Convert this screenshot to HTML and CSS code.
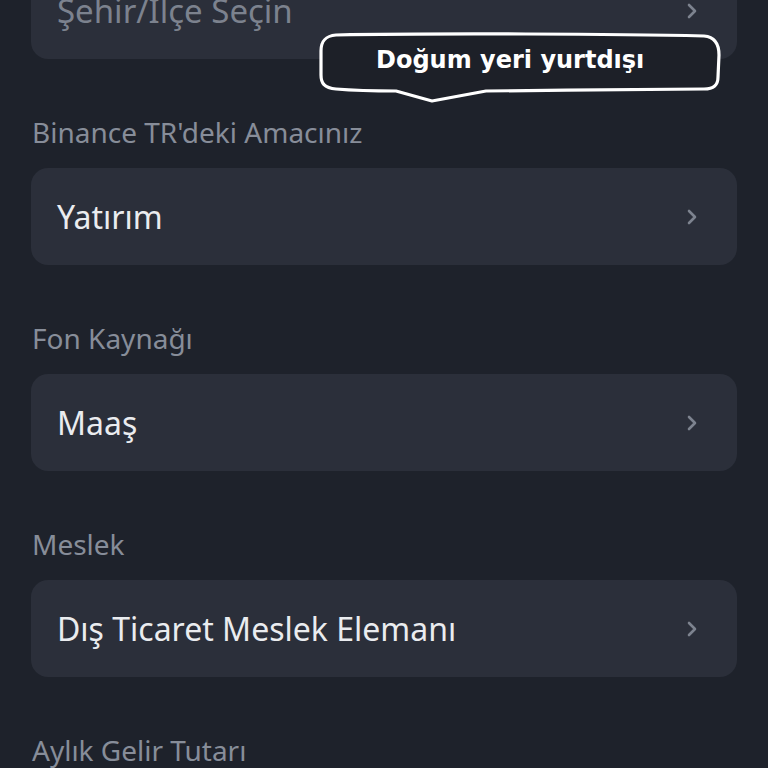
FILE: index.html
```html
<!DOCTYPE html>
<html lang="tr">
<head>
<meta charset="utf-8">
<link rel="stylesheet" href="styles.css">
</head>
<body>
<main class="form">
  <div class="field field-first">
    <div class="select">
      <span class="placeholder">Şehir/Ilçe Seçin</span>
      <svg class="chev" viewBox="0 0 10 16" width="10" height="16"><path d="M2 2 L8 8 L2 14" fill="none" stroke="currentColor" stroke-width="2.6" stroke-linecap="round" stroke-linejoin="round"/></svg>
    </div>
  </div>
  <div class="field">
    <div class="label">Binance TR'deki Amacınız</div>
    <div class="select">
      <span class="value">Yatırım</span>
      <svg class="chev" viewBox="0 0 10 16" width="10" height="16"><path d="M2 2 L8 8 L2 14" fill="none" stroke="currentColor" stroke-width="2.6" stroke-linecap="round" stroke-linejoin="round"/></svg>
    </div>
  </div>
  <div class="field">
    <div class="label">Fon Kaynağı</div>
    <div class="select">
      <span class="value">Maaş</span>
      <svg class="chev" viewBox="0 0 10 16" width="10" height="16"><path d="M2 2 L8 8 L2 14" fill="none" stroke="currentColor" stroke-width="2.6" stroke-linecap="round" stroke-linejoin="round"/></svg>
    </div>
  </div>
  <div class="field">
    <div class="label">Meslek</div>
    <div class="select">
      <span class="value">Dış Ticaret Meslek Elemanı</span>
      <svg class="chev" viewBox="0 0 10 16" width="10" height="16"><path d="M2 2 L8 8 L2 14" fill="none" stroke="currentColor" stroke-width="2.6" stroke-linecap="round" stroke-linejoin="round"/></svg>
    </div>
  </div>
  <div class="field">
    <div class="label">Aylık Gelir Tutarı</div>
  </div>
</main>
<div class="balloon">
  <svg class="balloon-shape" viewBox="0 0 404 74" width="404" height="74">
    <path d="M18 4 C120 2 300 3 386 5 C398 6 401 14 401 24 L400 46 C400 54 396 58 386 58 C320 59 240 59 168 60 L114 70 L78 60 C50 60 30 59 18 58 C6 57 3 52 3 44 L3 20 C3 10 7 5 18 4 Z" fill="#1d2028" stroke="#ffffff" stroke-width="3.2" stroke-linejoin="round"/>
  </svg>
  <span class="balloon-text">Doğum yeri yurtdışı</span>
</div>
</body>
</html>
```

FILE: styles.css
```css
html, body {
  margin: 0;
  padding: 0;
  background: #1e222b;
  width: 768px;
  height: 768px;
  overflow: hidden;
}
body {
  position: relative;
  font-family: "Noto Sans", "Open Sans", sans-serif;
}
.form {
  display: flex;
  flex-direction: column;
  gap: 57px;
  padding: 0 31px;
  margin-top: -38px;
}
.field {
  display: flex;
  flex-direction: column;
  gap: 20px;
}
.label {
  height: 32px;
  line-height: 32px;
  font-size: 28px;
  color: #878d99;
  padding-left: 1px;
}
.select {
  height: 97px;
  border-radius: 17px;
  background: #2b2f3a;
  display: flex;
  align-items: center;
  justify-content: space-between;
  padding: 0 40px 0 26px;
}
.value {
  font-size: 32px;
  color: #eaecef;
}
.placeholder {
  font-size: 33px;
  color: #7c828e;
}
.chev {
  color: #7d838f;
}
.balloon {
  position: absolute;
  left: 318px;
  top: 31px;
  width: 404px;
  height: 74px;
}
.balloon-shape {
  position: absolute;
  left: 0;
  top: 0;
}
.balloon-text {
  position: absolute;
  left: 58px;
  top: 15px;
  font-family: "DejaVu Sans", Verdana, sans-serif;
  font-weight: bold;
  font-size: 24px;
  color: #ffffff;
  white-space: nowrap;
}
```
